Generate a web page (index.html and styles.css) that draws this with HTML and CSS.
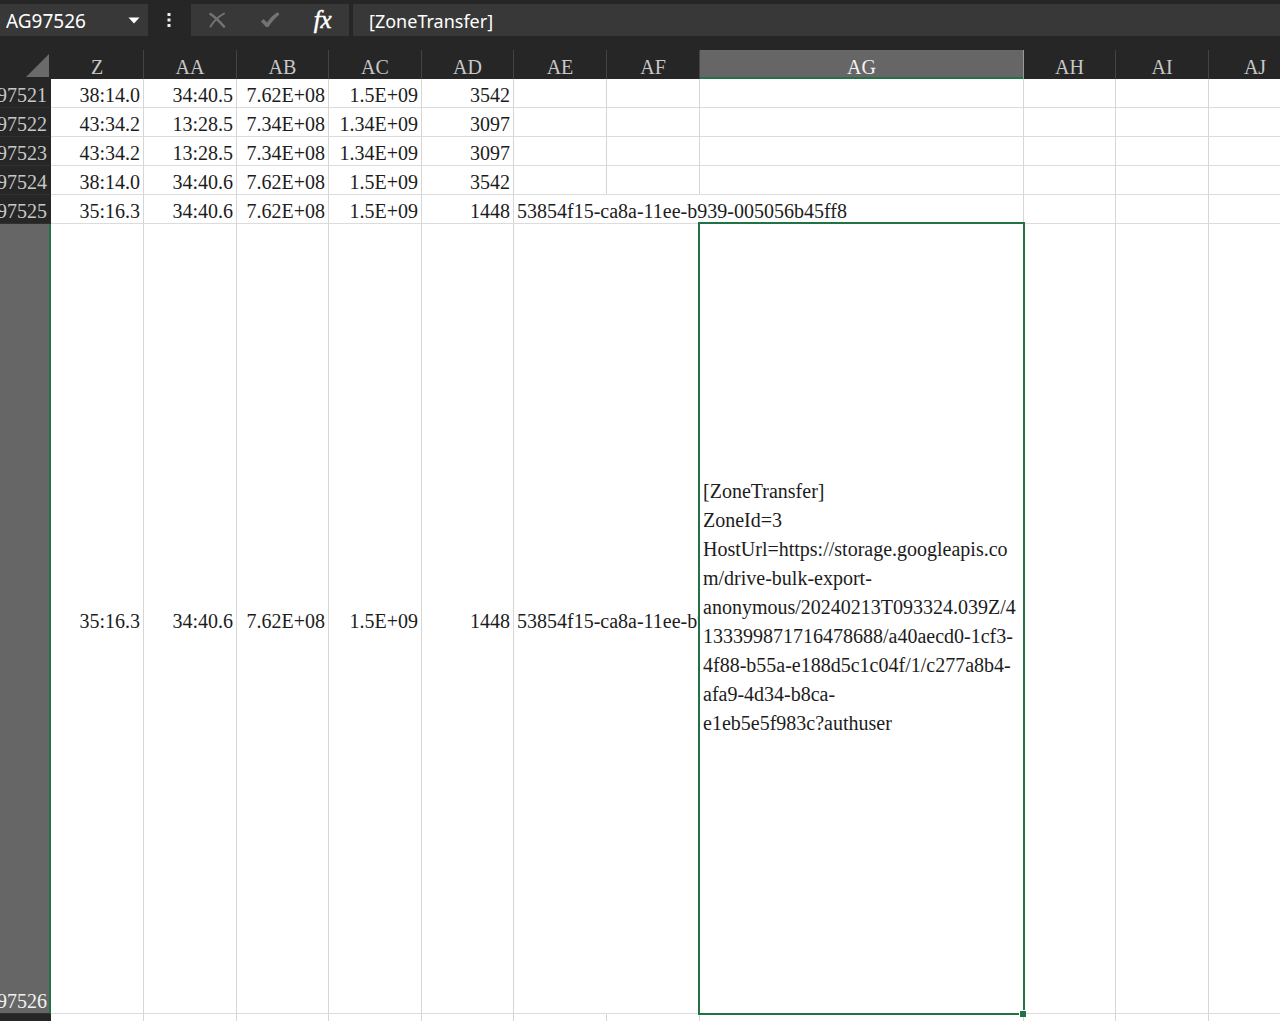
FILE: index.html
```
<!DOCTYPE html>
<html lang="en">
<head>
  <meta charset="UTF-8" />
  <title>AG97526</title>
  <meta name="viewport" content="width=device-width, initial-scale=1.0"/>
  <link rel="stylesheet" href="styles.css">
</head>
<body>

<div class="formula-bar">
  <div class="name-box">
    <input class="name-input" type="text" aria-label="Name Box" value="AG97526">
    <button class="name-arrow" aria-label="Open name list">
      <svg width="12" height="7" viewBox="0 0 12 7"><path d="M0.5 0.5h11L6 6.5z" fill="#fff"/></svg>
    </button>
  </div>
  <svg class="dots" width="4" height="16" viewBox="0 0 4 16" fill="#f0f0f0"><path d="M0.5 1h3v3h-3zM0.5 6.5h3v3h-3zM0.5 12h3v3h-3z"/></svg>
  <div class="tools">
    <button aria-label="Cancel">
      <svg width="18" height="16" viewBox="0 0 18 16" fill="none" stroke="#737373" stroke-linecap="round"><path d="M2.500 2C7 5 12 10 16 14.500" stroke-width="2.6"/><path d="M16 1.5C10 5 5 10 2.500 14.5" stroke-width="2"/></svg>
    </button>
    <button aria-label="Enter">
      <svg width="20" height="16" viewBox="0 0 20 16" fill="#737373"><path d="M1 9.500L3.500 7L7 10.500C10 6 13 3 17 0.500L19 1V3C14.500 6.500 11 10.500 8.500 15H6z"/></svg>
    </button>
    <button class="fx" aria-label="Insert Function"><i>fx</i></button>
  </div>
  <input class="formula" type="text" aria-label="Formula" value="[ZoneTransfer]">
</div>

<div class="sheet">
  <table class="grid">
    <colgroup>
      <col class="row-num">
      <col class="wide"><col class="wide"><col class="std"><col class="wide"><col class="std"><col class="wide"><col class="wide">
      <col class="url">
      <col class="std"><col class="wide"><col class="wide">
    </colgroup>
    <thead>
      <tr>
        <th class="corner"><svg width="23" height="23" viewBox="0 0 23 23"><path d="M23 0v23H0z" fill="#6a6a6a"/></svg></th>
        <th>Z</th><th>AA</th><th>AB</th><th>AC</th><th>AD</th><th>AE</th><th>AF</th><th class="active">AG</th><th>AH</th><th>AI</th><th>AJ</th>
      </tr>
    </thead>
    <tbody>
      <tr><th>97521</th><td>38:14.0</td><td>34:40.5</td><td>7.62E+08</td><td>1.5E+09</td><td>3542</td><td></td><td></td><td></td><td></td><td></td><td></td></tr>
      <tr><th>97522</th><td>43:34.2</td><td>13:28.5</td><td>7.34E+08</td><td>1.34E+09</td><td>3097</td><td></td><td></td><td></td><td></td><td></td><td></td></tr>
      <tr><th>97523</th><td>43:34.2</td><td>13:28.5</td><td>7.34E+08</td><td>1.34E+09</td><td>3097</td><td></td><td></td><td></td><td></td><td></td><td></td></tr>
      <tr><th>97524</th><td>38:14.0</td><td>34:40.6</td><td>7.62E+08</td><td>1.5E+09</td><td>3542</td><td></td><td></td><td></td><td></td><td></td><td></td></tr>
      <tr><th>97525</th><td>35:16.3</td><td>34:40.6</td><td>7.62E+08</td><td>1.5E+09</td><td>1448</td><td class="spill">53854f15-ca8a-11ee-b939-005056b45ff8</td><td class="spill"></td><td></td><td></td><td></td><td></td></tr>
      <tr class="tall">
        <th class="active">97526</th><td>35:16.3</td><td>34:40.6</td><td>7.62E+08</td><td>1.5E+09</td><td>1448</td><td class="spill clipped" colspan="2">53854f15-ca8a-11ee-b939-005056b45ff8</td>
        <td class="selected">[ZoneTransfer]<br>ZoneId=3<br>HostUrl=https://storage.googleapis.co<br>m/drive-bulk-export-<br>anonymous/20240213T093324.039Z/4<br>133399871716478688/a40aecd0-1cf3-<br>4f88-b55a-e188d5c1c04f/1/c277a8b4-<br>afa9-4d34-b8ca-<br>e1eb5e5f983c?authuser<span class="handle"></span></td>
        <td></td><td></td><td></td>
      </tr>
      <tr><th></th><td></td><td></td><td></td><td></td><td></td><td></td><td></td><td></td><td></td><td></td><td></td></tr>
    </tbody>
  </table>
</div>

</body>
</html>
```
FILE: styles.css
```
* { box-sizing: border-box; }
body { margin: 0; height: 100vh; overflow: hidden; display: flex; flex-direction: column; background: #fff; }
button, input { background: none; border: 0; padding: 0; margin: 0; color: #fff; font: 18px "Noto Sans", sans-serif; }
svg { display: block; }

/* formula bar */
.formula-bar { display: flex; align-items: center; flex: none; height: 50px; padding: 4px 0 14px; background: #262626; }
.name-box { display: flex; width: 148px; height: 32px; background: #383838; }
.name-input { flex: 1; min-width: 0; padding: 1px 0 0 6px; font-size: 19px; }
.name-arrow { width: 28px; display: flex; align-items: center; justify-content: center; }
.dots { margin: 0 20px 0 19px; }
.tools { display: flex; width: 158px; height: 32px; background: #383838; }
.tools button { flex: 1; display: flex; align-items: center; justify-content: center; }
.tools .fx { font: 25px "Liberation Serif", serif; -webkit-text-stroke: 0.5px #fff; }
.formula { flex: 1; min-width: 0; height: 32px; margin-left: 4px; padding: 1px 0 0 16px; background: #383838; }

/* grid, scrolled so the row numbers are partly cut off */
.sheet { flex: 1; overflow: hidden; }
.grid { table-layout: fixed; width: 1312px; margin-left: -12px; border-collapse: separate; border-spacing: 0; font: 20px/29px "Liberation Serif", serif; color: #1c1c1c; }
.row-num { width: 63px; }
.wide { width: 93px; }
.std { width: 92px; }
.url { width: 324px; }
.grid tr { height: 29px; }
.grid th { padding: 0; height: 29px; background: #262626; color: #c8c8c8; font-weight: normal; line-height: 24px; }
.grid thead th { padding-top: 5px; border-right: 1px solid #444; }
.grid tbody th { text-align: right; vertical-align: bottom; padding-right: 4px; border-bottom: 1px solid #303030; }
.grid thead .corner { padding: 0 2px 2px 0; border-right: 0; vertical-align: bottom; }
.corner svg { margin-left: auto; }
.grid td { height: 29px; padding: 5px 3px 0 0; line-height: 23px; text-align: right; white-space: nowrap; border-right: 1px solid #d6d6d6; border-bottom: 1px solid #dcdcdc; }
.grid .spill { text-align: left; padding-left: 3px; border-right-color: transparent; }
.grid .clipped { overflow: hidden; }
.grid .tall td { height: 790px; }
.grid .active { background: #666; color: #f2f2f2; }
.grid thead .active { border-right-color: #999; box-shadow: inset 0 -2px #217346; }
.grid tbody .active { border-right: 2px solid #217346; padding-right: 2px; }

.grid .selected { position: relative; background: #fff; text-align: left; padding: 0 0 22px 3px; line-height: 29px; }
.selected::before { content: ""; position: absolute; top: -2px; right: -2px; bottom: -2px; left: -2px; border: 2px solid #217346; }
.handle { position: absolute; right: -3px; bottom: -4px; width: 7px; height: 7px; background: #217346; border: 1px solid #fff; border-width: 1px 0 0 1px; }
```
